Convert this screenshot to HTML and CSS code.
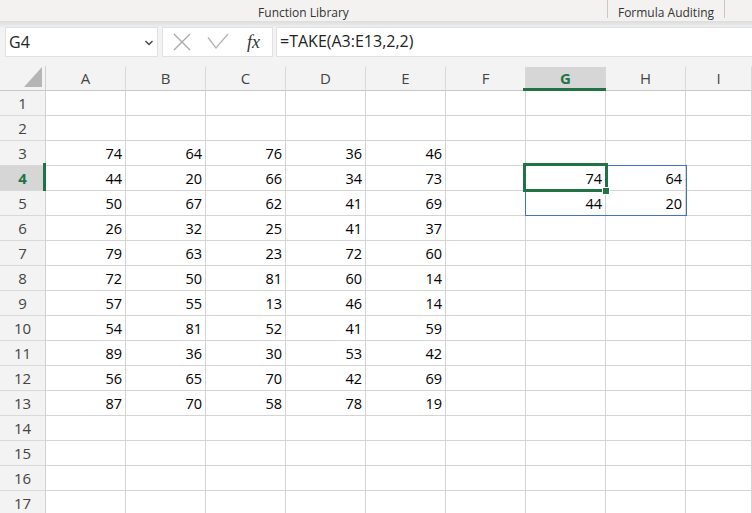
FILE: index.html
```html
<!DOCTYPE html>
<html>
<head>
<meta charset="utf-8">
<link rel="stylesheet" href="styles.css">
</head>
<body>
<div class="ribbon">
  <div class="group g1"><span>Function Library</span></div>
  <div class="group g2"><span>Formula Auditing</span></div>
</div>
<div class="shadow"></div>
<div class="fbar">
  <div class="namebox">
    <span class="ref">G4</span>
    <svg class="chev" width="10" height="6" viewBox="0 0 10 6"><path d="M1.5 1 L5 4.5 L8.5 1" fill="none" stroke="#444" stroke-width="1.4"/></svg>
  </div>
  <div class="fxbox">
    <svg class="ix" width="18" height="18" viewBox="0 0 18 18"><path d="M1 1 L17 17 M17 1 L1 17" fill="none" stroke="#a8a8a8" stroke-width="1.3"/></svg>
    <svg class="ok" width="22" height="18" viewBox="0 0 22 18"><path d="M1 4.5 L9 15 L21 1" fill="none" stroke="#b4b4b4" stroke-width="1.3"/></svg>
    <span class="fx">fx</span>
  </div>
  <div class="formula">=TAKE(A3:E13,2,2)</div>
</div>
<div class="sheet">
  <div class="corner"><svg width="46" height="24" viewBox="0 0 46 24"><path d="M42 1 L42 21 L24 21 Z" fill="#b5b5b5"/></svg></div>
  <div class="hd">A</div><div class="hd">B</div><div class="hd">C</div><div class="hd">D</div><div class="hd">E</div><div class="hd">F</div><div class="hd sel">G</div><div class="hd">H</div><div class="hd">I</div>

  <div class="rh">1</div><div class="c"></div><div class="c"></div><div class="c"></div><div class="c"></div><div class="c"></div><div class="c"></div><div class="c"></div><div class="c"></div><div class="c"></div>
  <div class="rh">2</div><div class="c"></div><div class="c"></div><div class="c"></div><div class="c"></div><div class="c"></div><div class="c"></div><div class="c"></div><div class="c"></div><div class="c"></div>
  <div class="rh">3</div><div class="c">74</div><div class="c">64</div><div class="c">76</div><div class="c">36</div><div class="c">46</div><div class="c"></div><div class="c"></div><div class="c"></div><div class="c"></div>
  <div class="rh sel">4</div><div class="c">44</div><div class="c">20</div><div class="c">66</div><div class="c">34</div><div class="c">73</div><div class="c"></div><div class="c">74</div><div class="c">64</div><div class="c"></div>
  <div class="rh">5</div><div class="c">50</div><div class="c">67</div><div class="c">62</div><div class="c">41</div><div class="c">69</div><div class="c"></div><div class="c">44</div><div class="c">20</div><div class="c"></div>
  <div class="rh">6</div><div class="c">26</div><div class="c">32</div><div class="c">25</div><div class="c">41</div><div class="c">37</div><div class="c"></div><div class="c"></div><div class="c"></div><div class="c"></div>
  <div class="rh">7</div><div class="c">79</div><div class="c">63</div><div class="c">23</div><div class="c">72</div><div class="c">60</div><div class="c"></div><div class="c"></div><div class="c"></div><div class="c"></div>
  <div class="rh">8</div><div class="c">72</div><div class="c">50</div><div class="c">81</div><div class="c">60</div><div class="c">14</div><div class="c"></div><div class="c"></div><div class="c"></div><div class="c"></div>
  <div class="rh">9</div><div class="c">57</div><div class="c">55</div><div class="c">13</div><div class="c">46</div><div class="c">14</div><div class="c"></div><div class="c"></div><div class="c"></div><div class="c"></div>
  <div class="rh">10</div><div class="c">54</div><div class="c">81</div><div class="c">52</div><div class="c">41</div><div class="c">59</div><div class="c"></div><div class="c"></div><div class="c"></div><div class="c"></div>
  <div class="rh">11</div><div class="c">89</div><div class="c">36</div><div class="c">30</div><div class="c">53</div><div class="c">42</div><div class="c"></div><div class="c"></div><div class="c"></div><div class="c"></div>
  <div class="rh">12</div><div class="c">56</div><div class="c">65</div><div class="c">70</div><div class="c">42</div><div class="c">69</div><div class="c"></div><div class="c"></div><div class="c"></div><div class="c"></div>
  <div class="rh">13</div><div class="c">87</div><div class="c">70</div><div class="c">58</div><div class="c">78</div><div class="c">19</div><div class="c"></div><div class="c"></div><div class="c"></div><div class="c"></div>
  <div class="rh">14</div><div class="c"></div><div class="c"></div><div class="c"></div><div class="c"></div><div class="c"></div><div class="c"></div><div class="c"></div><div class="c"></div><div class="c"></div>
  <div class="rh">15</div><div class="c"></div><div class="c"></div><div class="c"></div><div class="c"></div><div class="c"></div><div class="c"></div><div class="c"></div><div class="c"></div><div class="c"></div>
  <div class="rh">16</div><div class="c"></div><div class="c"></div><div class="c"></div><div class="c"></div><div class="c"></div><div class="c"></div><div class="c"></div><div class="c"></div><div class="c"></div>
  <div class="rh">17</div><div class="c"></div><div class="c"></div><div class="c"></div><div class="c"></div><div class="c"></div><div class="c"></div><div class="c"></div><div class="c"></div><div class="c"></div>

  <div class="spill"></div>
  <div class="active"></div>
  <div class="handle"></div>
</div>
</body>
</html>
```

FILE: styles.css
```css
html, body {
  margin: 0;
  height: 100%;
  overflow: hidden;
  background: #f3f3f3;
  font-family: "Open Sans", "Noto Sans", sans-serif;
  color: #333;
}

.ribbon {
  display: flex;
  height: 21px;
  background: #f3f2f1;
}

.group {
  box-sizing: border-box;
  height: 18px;
  padding-top: 3px;
  line-height: 19px;
  font-size: 12px;
  color: #333;
  text-align: center;
  border-right: 1px solid #c8c8c8;
  white-space: nowrap;
}

.g1 { width: 608px; }
.g2 { width: 117px; }

.shadow {
  height: 6px;
  background: linear-gradient(#dcdcdc, #efefef);
}

.fbar {
  display: flex;
  height: 30px;
  padding-left: 5px;
  margin-bottom: 9px;
}

.namebox {
  box-sizing: border-box;
  width: 153px;
  height: 30px;
  display: flex;
  align-items: center;
  background: #fff;
  border: 1px solid #e1e1e1;
  padding-left: 3px;
}

.ref {
  font-size: 16px;
  line-height: 26px;
  color: #222;
}

.chev {
  margin-left: auto;
  margin-right: 3px;
  margin-top: 1px;
}

.fxbox {
  box-sizing: border-box;
  width: 111px;
  height: 30px;
  margin-left: 4px;
  display: flex;
  align-items: center;
  background: #fff;
  border: 1px solid #e1e1e1;
}

.ix { margin-left: 10px; }
.ok { margin-left: 16px; }

.fx {
  margin-left: 18px;
  font-family: "Liberation Serif", serif;
  font-style: italic;
  font-size: 18px;
  color: #333;
  line-height: 26px;
}

.formula {
  flex: 1;
  box-sizing: border-box;
  height: 30px;
  margin-left: 3px;
  background: #fff;
  border: 1px solid #e1e1e1;
  border-right: none;
  padding-left: 3px;
  font-size: 16px;
  line-height: 26px;
  color: #222;
  white-space: nowrap;
}

.sheet {
  position: relative;
  display: grid;
  grid-template-columns: 46px repeat(8, 80px) 1fr;
  grid-auto-rows: 25px;
}

.corner {
  box-sizing: border-box;
  background: #f3f3f3;
  border-right: 1px solid #cfcfcf;
  border-bottom: 1px solid #c8c8c8;
}

.corner svg { display: block; }

.hd {
  box-sizing: border-box;
  position: relative;
  background: #f3f3f3;
  border-right: 1px solid #d9d9d9;
  border-bottom: 1px solid #c8c8c8;
  border-top: 1px solid #f3f3f3;
  text-align: center;
  font-size: 15px;
  line-height: 22px;
  color: #444;
}

.rh {
  box-sizing: border-box;
  position: relative;
  background: #f3f3f3;
  border-right: 1px solid #cfcfcf;
  border-bottom: 1px solid #d9d9d9;
  text-align: center;
  font-size: 15px;
  line-height: 24px;
  color: #444;
}

.hd.sel, .rh.sel {
  background: #d6d6d6;
  color: #217346;
  font-weight: 700;
}

.hd.sel::after {
  content: "";
  position: absolute;
  left: -3px;
  right: -2px;
  bottom: -1px;
  height: 3px;
  background: #217346;
}

.rh.sel::after {
  content: "";
  position: absolute;
  right: -1px;
  top: -3px;
  bottom: -1px;
  width: 3px;
  background: #217346;
}

.c {
  box-sizing: border-box;
  background: #fff;
  border-right: 1px solid #d4d4d4;
  border-bottom: 1px solid #d4d4d4;
  text-align: right;
  padding: 2px 3px 0 0;
  font-family: "Open Sans", "Noto Sans", sans-serif;
  font-size: 14.5px;
  line-height: 22px;
  color: #000;
}

.spill {
  position: absolute;
  left: 525px;
  top: 99px;
  width: 162px;
  height: 51px;
  box-sizing: border-box;
  border: 1px solid #4472c4;
}

.active {
  position: absolute;
  left: 523px;
  top: 97px;
  width: 85px;
  height: 29px;
  box-sizing: border-box;
  border: 3px solid #217346;
}

.handle {
  position: absolute;
  left: 602px;
  top: 121px;
  width: 8px;
  height: 8px;
  box-sizing: border-box;
  background: #217346;
  border: 1px solid #fff;
}
```
